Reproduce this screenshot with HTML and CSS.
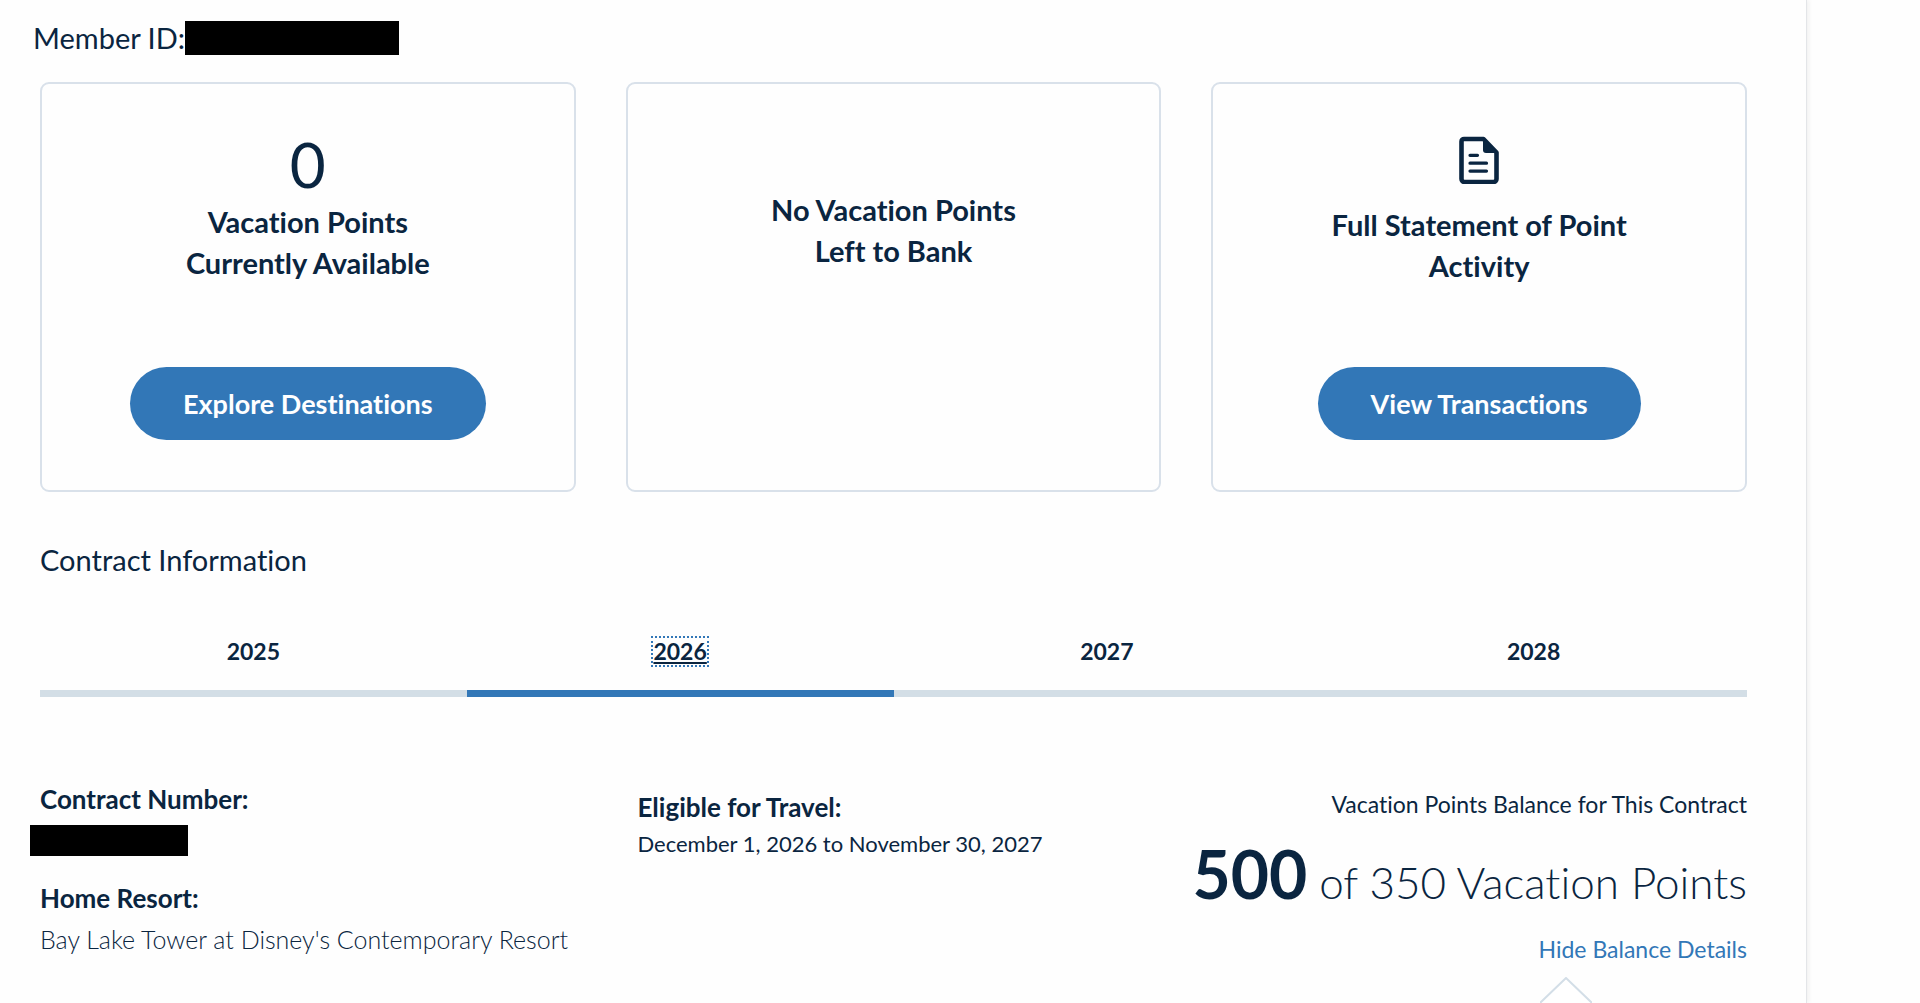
FILE: index.html
```html
<!DOCTYPE html>
<html lang="en">
<head>
  <meta charset="UTF-8">
  <meta name="viewport" content="width=device-width, initial-scale=1.0">
  <title>Vacation Points</title>
  <link rel="stylesheet" href="styles.css">
</head>
<body>
  <main class="panel">
    <div class="member">Member ID:<span class="redacted member-redacted"></span></div>

    <section class="cards">
      <div class="card">
        <div class="card-number">0</div>
        <h2 class="card-title">Vacation Points<br>Currently Available</h2>
        <button class="button" type="button">Explore Destinations</button>
      </div>
      <div class="card card-plain">
        <h2 class="card-title">No Vacation Points<br>Left to Bank</h2>
      </div>
      <div class="card">
        <svg class="card-icon" viewBox="0 0 40 48" aria-hidden="true">
          <path d="M5 3h19.500L37.500 16.500v26.500a3 3 0 0 1-3 3H5.500a3 3 0 0 1-3-3V5.500a2.500 2.500 0 0 1 2.500-2.500z" fill="none" stroke="#0a2540" stroke-width="4.600" stroke-linejoin="round"/>
          <path d="M24 2l14 15H27a3 3 0 0 1-3-3z" fill="#0a2540"/>
          <path d="M11 19.300h7.500M11 27.200h16.500M11 35.100h16.500" fill="none" stroke="#0a2540" stroke-width="3.200" stroke-linecap="round"/>
        </svg>
        <h2 class="card-title">Full Statement of Point<br>Activity</h2>
        <button class="button" type="button">View Transactions</button>
      </div>
    </section>

    <h2 class="section-title">Contract Information</h2>

    <nav class="tabs">
      <div class="tab"><a href="#2025">2025</a></div>
      <div class="tab active"><a href="#2026">2026</a></div>
      <div class="tab"><a href="#2027">2027</a></div>
      <div class="tab"><a href="#2028">2028</a></div>
    </nav>

    <section class="contract">
      <div class="contract-info">
        <h3 class="label">Contract Number:</h3>
        <span class="redacted contract-redacted"></span>
        <h3 class="label">Home Resort:</h3>
        <p class="resort">Bay Lake Tower at Disney's Contemporary Resort</p>
      </div>
      <div class="travel">
        <h3 class="label">Eligible for Travel:</h3>
        <p class="dates">December 1, 2026 to November 30, 2027</p>
      </div>
      <div class="balance">
        <p class="balance-label">Vacation Points Balance for This Contract</p>
        <p class="balance-total"><strong>500</strong> of 350 Vacation Points</p>
        <a class="balance-link" href="#details">Hide Balance Details</a>
        <svg class="pointer" viewBox="0 0 52 26" aria-hidden="true">
          <path d="M0 26L26 1l26 25" fill="#fff" stroke="#d3dee7" stroke-width="2"/>
        </svg>
      </div>
    </section>
  </main>
</body>
</html>
```
FILE: styles.css
```css
* { box-sizing: border-box; }
body { margin: 0; background: #fefefe; color: #0a2540; font-family: Lato, "Liberation Sans", sans-serif; font-variant-ligatures: none; }
h2, h3, p { margin: 0; }

.panel { margin-right: 113px; padding: 18px 59px 0 40px; border-right: 1px solid #e3e5e8; box-shadow: 2px 0 4px #f1f1f1; }
.redacted { display: block; background: #000; }

.member { display: flex; align-items: center; margin-left: -7px; font-size: 29px; line-height: 40px; }
.member-redacted { width: 214px; height: 34px; }

.cards { display: grid; grid-template-columns: repeat(3, 1fr); gap: 50px; margin-top: 24px; }
.card { display: flex; flex-direction: column; align-items: center; min-height: 410px; padding: 52px 24px 50px; border: 2px solid #d9e1ea; border-radius: 9px; text-align: center; }
.card-plain { padding-top: 105px; }
.card-number { font-size: 62px; font-weight: 400; line-height: 56px; margin-bottom: 9px; }
.card-icon { width: 40px; height: 48px; margin-bottom: 20px; }
.card-title { font-size: 29px; font-weight: 700; line-height: 41px; }
.button { margin-top: auto; padding: 0 53px; border: none; border-radius: 37px; background: #3277b7; color: #fff; font-family: inherit; font-size: 27px; font-weight: 700; font-variant-ligatures: none; line-height: 73px; cursor: pointer; }

.section-title { margin-top: 48px; font-size: 29px; font-weight: 400; line-height: 40px; }

.tabs { display: grid; grid-template-columns: repeat(4, 1fr); margin-top: 48px; }
.tab { padding: 10px 0 25px; border-bottom: 7px solid #d3dee6; text-align: center; font-size: 23px; font-weight: 700; line-height: 27px; }
.tab a { display: inline-block; color: inherit; text-decoration: none; }
.tab.active { border-color: #3277b7; }
.tab.active a { outline: 2px dotted #3277b7; text-decoration: underline; }

.contract { display: flex; justify-content: space-between; margin-top: 84px; }
.contract-info { flex: 0 0 35%; }
.label { font-size: 26px; font-weight: 700; line-height: 36px; }
.contract-redacted { width: 158px; height: 31px; margin: 8px 0 24px -10px; }
.resort { margin-top: 5px; font-size: 25px; font-weight: 300; line-height: 36px; }
.travel { padding-top: 8px; }
.dates { font-size: 22px; line-height: 38px; }
.balance { flex: 1; text-align: right; }
.balance-label { padding-top: 8px; font-size: 23px; line-height: 30px; }
.balance-total { margin-top: 15px; font-size: 44px; font-weight: 300; line-height: 80px; }
.balance-total strong { font-size: 66px; font-weight: 700; }
.balance-link { display: block; margin-top: 12px; color: #3277b7; font-size: 23px; line-height: 30px; text-decoration: none; }
.pointer { display: block; width: 52px; height: 26px; margin: 13px 155px 0 auto; }
```
